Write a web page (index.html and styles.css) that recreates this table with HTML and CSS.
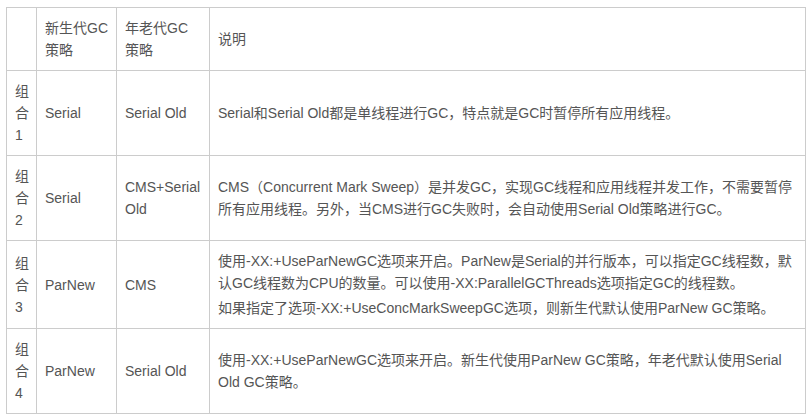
FILE: index.html
```html
<!DOCTYPE html>
<html>
  <head>
    <meta charset="utf-8">
    <title>GC组合</title>
    <link rel="stylesheet" href="styles.css">
  </head>
  <body>
    <table class="gc-table">
      <colgroup>
        <col class="col-no">
        <col class="col-young">
        <col class="col-old">
        <col>
      </colgroup>
      <tr class="head-row">
        <td></td>
        <td>新生代GC策略</td>
        <td>年老代GC策略</td>
        <td>说明</td>
      </tr>
      <tr>
        <td>组合1</td>
        <td>Serial</td>
        <td>Serial Old</td>
        <td><p>Serial和Serial Old都是单线程进行GC，特点就是GC时暂停所有应用线程。</p></td>
      </tr>
      <tr>
        <td>组合2</td>
        <td>Serial</td>
        <td>CMS+Serial Old</td>
        <td><p>CMS（Concurrent Mark Sweep）是并发GC，实现GC线程和应用线程并发工作，不需要暂停所有应用线程。另外，当CMS进行GC失败时，会自动使用Serial Old策略进行GC。</p></td>
      </tr>
      <tr class="tall-row">
        <td>组合3</td>
        <td>ParNew</td>
        <td>CMS</td>
        <td>
          <p>使用-XX:+UseParNewGC选项来开启。ParNew是Serial的并行版本，可以指定GC线程数，默认GC线程数为CPU的数量。可以使用-XX:ParallelGCThreads选项指定GC的线程数。</p>
          <p>如果指定了选项-XX:+UseConcMarkSweepGC选项，则新生代默认使用ParNew GC策略。</p>
        </td>
      </tr>
      <tr>
        <td>组合4</td>
        <td>ParNew</td>
        <td>Serial Old</td>
        <td><p>使用-XX:+UseParNewGC选项来开启。新生代使用ParNew GC策略，年老代默认使用Serial Old GC策略。</p></td>
      </tr>
    </table>
  </body>
</html>
```

FILE: styles.css
```css
body {
  margin: 0;
  padding: 7px 0 0 6px;
  background: #fff;
  font-family: "Liberation Sans", Arial, "Noto Sans CJK SC", sans-serif;
  font-size: 14px;
  color: #555;
}
.gc-table {
  width: 800px;
  border-collapse: collapse;
  table-layout: fixed;
  line-height: 22px;
}
.gc-table td {
  border: 1px solid #ccc;
  padding: 9px 8px;
  vertical-align: middle;
  height: 66px;
}
.col-no {
  width: 30px;
}
.col-young {
  width: 80px;
}
.col-old {
  width: 93px;
}
.gc-table p {
  margin: 0;
}
.gc-table p + p {
  margin-top: 3px;
}
.head-row td {
  height: 44px;
}
```
